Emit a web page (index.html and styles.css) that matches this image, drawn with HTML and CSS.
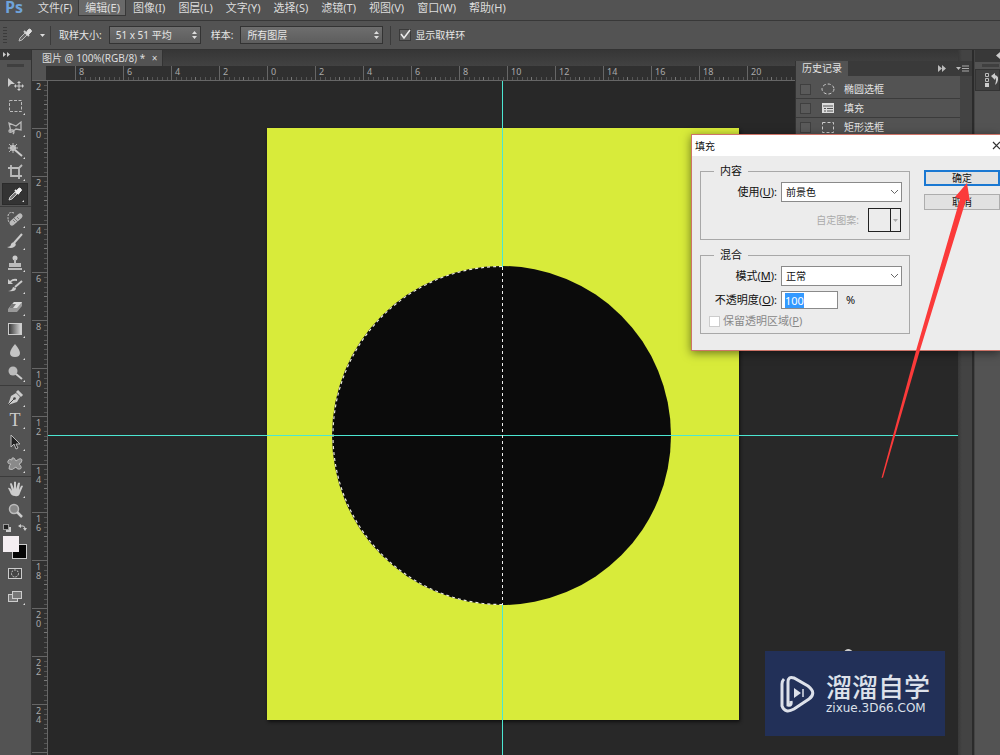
FILE: index.html
```html
<!DOCTYPE html>
<html lang="zh-CN">
<head>
<meta charset="utf-8">
<title>图片 @ 100%(RGB/8)</title>
<link rel="stylesheet" href="styles.css">
</head>
<body>
<div class="app">
  <nav class="menubar">
    <span class="logo">Ps</span>
    <button>文件(F)</button><button class="open">编辑(E)</button><button>图像(I)</button><button>图层(L)</button><button>文字(Y)</button><button>选择(S)</button><button>滤镜(T)</button><button>视图(V)</button><button>窗口(W)</button><button>帮助(H)</button>
  </nav>

  <div class="options">
    <span class="grip"></span>
    <svg class="current-tool" width="28" height="16" viewBox="0 0 28 16"><path d="M2 14l1-3 5-5 2 2-5 5z" fill="#666" stroke="#bbb"/><path d="M7 4l5 5" stroke="#ccc" stroke-width="2"/><path d="M9 6l2-3q2-2 3 0t0 2l-3 3z" fill="#ddd" stroke="#ddd"/><path d="M23 7h5l-2.500 3z" fill="#ddd"/></svg>
    <span class="divider"></span>
    <label for="size">取样大小:</label>
    <span class="dark-select size-select"><select id="size"><option>51 x 51 平均</option></select><svg width="7" height="10" viewBox="0 0 7 10"><path d="M1 4l2.500-3L6 4zM1 6l2.500 3L6 6z" fill="#ddd"/></svg></span>
    <label for="sample">样本:</label>
    <span class="dark-select sample-select"><select id="sample"><option>所有图层</option></select><svg width="7" height="10" viewBox="0 0 7 10"><path d="M1 4l2.500-3L6 4zM1 6l2.500 3L6 6z" fill="#ddd"/></svg></span>
    <span class="divider"></span>
    <label class="ring"><span class="dark-check"><input type="checkbox" checked><svg width="12" height="12" viewBox="0 0 12 12"><path d="M2 5l3 4 6-8" fill="none" stroke="#eee" stroke-width="1.500"/></svg></span>显示取样环</label>
  </div>

  <div class="workspace">
    <aside class="tools">
      <div class="tools-head"><svg width="7" height="5" viewBox="0 0 7 5"><path d="M0 0l3 2.500L0 5zM4 0l3 2.500L4 5z" fill="#ccc"/></svg></div>
      <span class="tools-grip"></span>
      <div class="group">
        <button class="tool" aria-label="移动"><svg viewBox="0 0 18 18"><path d="M2 3v9l3-3h4z" fill="#ccc"/><path d="M13 7v8M9 11h8" stroke="#ccc"/><path d="M13 6l2 2h-4zM13 16l2-2h-4zM8 11l2-2v4zM18 11l-2-2v4z" fill="#ccc"/></svg></button>
        <button class="tool more" aria-label="选框"><svg viewBox="0 0 18 18"><rect x="3.500" y="3.500" width="12" height="11" fill="none" stroke="#bbb" stroke-dasharray="3 1.500"/></svg></button>
        <button class="tool more" aria-label="套索"><svg viewBox="0 0 18 18"><path d="M5 13L3 4l7 3 5-4v8l-5-1-4 3q-3 1-3-1t4-1q2 2 0 4" fill="none" stroke="#bbb" stroke-width="1.300"/></svg></button>
        <button class="tool more" aria-label="魔棒"><svg viewBox="0 0 18 18"><circle cx="7" cy="7" r="3" fill="#ccc"/><path d="M7 2v10M2 7h10M3 3l8 8M11 3l-8 8" stroke="#bbb"/><path d="M9 9l7 6" stroke="#ccc" stroke-width="2"/></svg></button>
        <button class="tool more" aria-label="裁剪"><svg viewBox="0 0 18 18"><path d="M5 2v11h11M2 5h11v11M13 5l3-3" fill="none" stroke="#bbb" stroke-width="1.800"/></svg></button>
        <button class="tool more active" aria-label="吸管"><svg viewBox="0 0 18 18"><path d="M3 15l1-3 5-5 2 2-5 5z" fill="#777" stroke="#ccc"/><path d="M9 5l4 4" stroke="#eee" stroke-width="2"/><path d="M10 7l2-3q2-2 3 0t0 2l-3 3z" fill="#eee" stroke="#eee"/></svg></button>
      </div>
      <div class="group">
        <button class="tool more" aria-label="修复画笔"><svg viewBox="0 0 18 18"><path d="M6 13L14 6" stroke="#bbb" stroke-width="5" stroke-linecap="round"/><path d="M8 8l4 4M7 10l2 2M11 7l2 2" stroke="#777"/><path d="M8 3Q2 1 2 7q0 4 1 5" fill="none" stroke="#ccc" stroke-dasharray="2 1"/></svg></button>
        <button class="tool more" aria-label="画笔"><svg viewBox="0 0 18 18"><path d="M16 2L8 11" stroke="#ccc" stroke-width="2"/><path d="M1 15q4 0 4-3 2-3 4-1t-1 4q-3 2-7 0z" fill="#ccc"/></svg></button>
        <button class="tool more" aria-label="图章"><svg viewBox="0 0 18 18"><circle cx="9" cy="4" r="2.500" fill="#ccc"/><path d="M8 5h2v4h5v4H3V9h5zM2 14h14v2H2z" fill="#bbb"/></svg></button>
        <button class="tool more" aria-label="历史画笔"><svg viewBox="0 0 18 18"><path d="M16 5l-7 6" stroke="#ccc" stroke-width="2"/><path d="M2 15q4 0 5-4l3 1q0 4-8 3zM2 3v5h5L5 6q3-2 6-1V3Q7 2 4 5z" fill="#ccc"/></svg></button>
        <button class="tool more" aria-label="橡皮擦"><svg viewBox="0 0 18 18"><path d="M2 11l6-7h8v4l-5 6H2z" fill="#999"/><path d="M8 4h8l-5 6H3z" fill="#ddd"/><path d="M6 6h4l-3 4H3z" fill="#777"/></svg></button>
        <button class="tool more" aria-label="渐变"><svg viewBox="0 0 18 18"><defs><linearGradient id="g"><stop stop-color="#333"/><stop offset="1" stop-color="#ddd"/></linearGradient></defs><rect x="2.500" y="3.500" width="13" height="11" fill="url(#g)" stroke="#ccc"/></svg></button>
        <button class="tool more" aria-label="模糊"><svg viewBox="0 0 18 18"><path d="M9 2q5 6 5 9 0 4-5 4t-5-4q0-3 5-9z" fill="#c4c4c4"/></svg></button>
        <button class="tool more" aria-label="减淡"><svg viewBox="0 0 18 18"><circle cx="7" cy="7" r="4.500" fill="#bbb"/><path d="M10 10l6 5" stroke="#ccc" stroke-width="2"/></svg></button>
      </div>
      <div class="group">
        <button class="tool more" aria-label="钢笔"><svg viewBox="0 0 18 18"><path d="M2 16l3-9 5-3 4 4-3 5z" fill="#ccc"/><path d="M11 2l5 5" stroke="#ccc" stroke-width="3"/><path d="M2 16l6-6" stroke="#444"/><circle cx="8.500" cy="9.500" r="1.300" fill="#444"/></svg></button>
        <button class="tool more type" aria-label="文字">T</button>
        <button class="tool more" aria-label="路径选择"><svg viewBox="0 0 18 18"><path d="M5 2v12l3-3 2 5 2-1-2-4h4z" fill="#222" stroke="#bbb"/></svg></button>
        <button class="tool more" aria-label="形状"><svg viewBox="0 0 18 18"><path d="M6 5q-1-3 2-2l2 3q5-4 6-1 0 3-3 4 4 4 1 5-3 1-4-2-4 4-7 2 0-4 2-5-4 0-3-3 1-3 4-1z" fill="#8a8a8a" stroke="#bbb"/></svg></button>
      </div>
      <div class="group">
        <button class="tool more" aria-label="抓手"><svg viewBox="0 0 18 18"><path d="M2 8q2-1 4 3L4 4q1-2 2 0l2 5V2q1-1 2 0v7l2-6q1-1 2 0l-1 7 2-4q1-1 2 0l-3 7q-1 4-5 3-4 0-5-4z" fill="#ccc"/></svg></button>
        <button class="tool" aria-label="缩放"><svg viewBox="0 0 18 18"><circle cx="8" cy="7" r="4.500" fill="#888" stroke="#bbb" stroke-width="1.500"/><path d="M11 10l5 5" stroke="#ccc" stroke-width="2.500"/></svg></button>
      </div>
      <svg class="swatches" width="28" height="40" viewBox="0 0 28 40"><rect x="4" y="4" width="5" height="5" fill="#ccc"/><rect x="1.500" y="1.500" width="5" height="5" fill="#222" stroke="#999"/><path d="M18 3h3q2 0 2 3" fill="none" stroke="#ccc"/><path d="M19 1v4l-3-2zM21 5h4l-2 3z" fill="#ccc"/><rect x="10.500" y="21.500" width="14" height="14" fill="#050505" stroke="#ccc"/><rect x="1" y="13" width="16" height="16" fill="#f5eff2"/></svg>
      <button class="tool" aria-label="快速蒙版"><svg viewBox="0 0 18 18"><rect x="2.500" y="3.500" width="13" height="10" fill="#444" stroke="#ccc"/><circle cx="9" cy="8.500" r="3.500" fill="none" stroke="#ccc" stroke-dasharray="2 1"/></svg></button>
      <button class="tool more" aria-label="屏幕模式"><svg viewBox="0 0 18 18"><rect x="2.500" y="7.500" width="9" height="7" fill="#777" stroke="#ccc"/><rect x="6.500" y="4.500" width="9" height="7" fill="#777" stroke="#ccc"/></svg></button>
    </aside>

    <main class="document">
      <div class="tabs"><button class="tab">图片 @ 100%(RGB/8) * <span class="tab-close">×</span></button></div>
      <div class="ruler-x">
        <span>8</span><span>6</span><span>4</span><span>2</span><span>0</span><span>2</span><span>4</span><span>6</span><span>8</span><span>10</span><span>12</span><span>14</span><span>16</span><span>18</span><span>20</span><span></span>
      </div>
      <div class="stage">
        <div class="ruler-y">
          <span>2</span><span>0</span><span>2</span><span>4</span><span>6</span><span>8</span><span>1 0</span><span>1 2</span><span>1 4</span><span>1 6</span><span>1 8</span><span>2 0</span><span>2 2</span><span>2 4</span><span></span>
        </div>
        <div class="canvas">
          <svg class="art" width="472" height="592" viewBox="267 128 472 592">
            <rect x="267" y="128" width="472" height="592" fill="#d8eb3a"/>
            <circle cx="501.500" cy="435.500" r="169.500" fill="#0b0b0b"/>
            <path d="M502 266.500A169 169 0 0 0 502 604.500" fill="none" stroke="#ededde" stroke-width="1.200" stroke-dasharray="3 3"/>
          </svg>
          <span class="guide-y"></span><span class="guide-x"></span>
          <span class="selection-edge"></span>
          <svg class="specks" width="26" height="5" viewBox="0 0 26 5"><path d="M1 5q5-8 11 0zM20 5q3-3 5 0z" fill="#ccc"/></svg>
          <div class="watermark">
            <svg width="36" height="38" viewBox="0 0 36 38"><path d="M12 26q1 5-3 4V7q0-6 6-4l14 8q9 7 1 13L15 34q-9 5-12-3V9q0-3 2-5" fill="none" stroke="#dde1ea" stroke-width="3"/><path d="M15 13l7 5-7 5z" fill="#dde1ea"/><path d="M24 14v8" stroke="#dde1ea" stroke-width="1.500"/></svg>
            <div><div class="brand">溜溜自学</div><div class="site">zixue.3D66.COM</div></div>
          </div>
        </div>
      </div>
      <section class="history">
        <header><h2>历史记录</h2><svg width="31" height="9" viewBox="0 0 31 9"><path d="M0 1l4 3.500L0 8zM4 1l4 3.500L4 8zM18 3h5l-2.500 3z" fill="#bbb"/><path d="M24 2h7M24 4.500h7M24 7h7" stroke="#aaa"/></svg></header>
        <ul>
          <li><i></i><svg width="14" height="12" viewBox="0 0 14 12"><ellipse cx="7" cy="6" rx="6" ry="5" fill="none" stroke="#ccc" stroke-dasharray="3 2"/></svg>椭圆选框</li>
          <li><i></i><svg width="14" height="12" viewBox="0 0 14 12"><path d="M1 1h12v10H1z" fill="#ddd"/><path d="M2 4h10M3 6.500h2M6 6.500h6M3 9h2M6 9h6" stroke="#555"/></svg>填充</li>
          <li><i></i><svg width="14" height="12" viewBox="0 0 14 12"><path d="M1.500 1.500h11v10h-11z" fill="none" stroke="#ccc" stroke-dasharray="3 2"/></svg>矩形选框</li>
        </ul>
      </section>
    </main>
    <div class="scrollbar"></div>
    <aside class="dock">
      <div class="dock-head"><svg width="4" height="7" viewBox="0 0 4 7"><path d="M4 0L0 3.500 4 7z" fill="#ccc"/></svg></div>
      <span class="dock-grip"></span>
      <button class="dock-tool" aria-label="历史记录"><svg width="16" height="16" viewBox="0 0 16 16"><path d="M1.500 1.500h3v3h-3zM1.500 6.500h3v3h-3z" fill="none" stroke="#bbb"/><path d="M1 11h4v4H1z" fill="#ccc"/><path d="M7 4l4-3v2q5 1 2 8l-2 2q2-6 0-7v2z" fill="#ccc"/></svg></button>
    </aside>
  </div>

  <form class="dialog">
    <header class="titlebar"><h1>填充</h1><button type="button" class="close" aria-label="关闭"><svg width="8" height="9" viewBox="0 0 8 9"><path d="M1 1l7 7M8 1L1 8" stroke="#333" stroke-width="1.200"/></svg></button></header>
    <div class="dialog-body">
      <div class="fields">
        <fieldset>
          <legend>内容</legend>
          <div class="row"><label for="use">使用(<u>U</u>):</label><span class="light-select"><select id="use"><option>前景色</option></select><svg width="9" height="6" viewBox="0 0 9 6"><path d="M1 1l3.500 3.500L8 1" fill="none" stroke="#666"/></svg></span></div>
          <div class="row pattern"><label for="pattern">自定图案:</label><button type="button" id="pattern" disabled><span></span><svg width="5" height="3" viewBox="0 0 5 3"><path d="M0 0h5L2.500 3z" fill="#aaa"/></svg></button></div>
        </fieldset>
        <fieldset class="blend">
          <legend>混合</legend>
          <div class="row"><label for="mode">模式(<u>M</u>):</label><span class="light-select"><select id="mode"><option>正常</option></select><svg width="9" height="6" viewBox="0 0 9 6"><path d="M1 1l3.500 3.500L8 1" fill="none" stroke="#666"/></svg></span></div>
          <div class="row"><label for="opacity">不透明度(<u>O</u>):</label><span class="percent"><input id="opacity" type="text" value="100" autofocus><span>%</span></span></div>
          <label class="keep"><input type="checkbox" disabled>保留透明区域(<u>P</u>)</label>
        </fieldset>
      </div>
      <div class="actions"><button type="submit" class="ok">确定</button><button type="button">取消</button></div>
    </div>
  </form>
  <svg class="pointer" width="92" height="296" viewBox="880 183 92 296"><path d="M881.500 478L883 477.500 920 350 966 200 970 202 967 183 955 197 960 199 916.500 349z" fill="#fb3a3a"/></svg>
</div>
<script src="focus.js"></script>
</body>
</html>
```

FILE: focus.js
```js
document.getElementById("opacity").select();
```

FILE: styles.css
```css
* { box-sizing: border-box; }
body { margin: 0; font: 11px/14px "Noto Sans", "Noto Sans CJK SC", sans-serif; color: #ddd; background: #282828; }
button, select, input { font: inherit; color: inherit; margin: 0; border-radius: 0; }
button { padding: 0; border: 0; background: none; }
svg { display: block; flex: none; }
h1, h2, ul { margin: 0; padding: 0; font-weight: normal; list-style: none; }
.app { position: relative; display: flex; flex-direction: column; height: 100vh; overflow: hidden; }

.menubar { display: flex; align-items: flex-start; height: 20px; background: #535353; white-space: nowrap; }
.logo { width: 31px; padding-left: 5px; font: bold 16px/14px "Open Sans", sans-serif; color: #6fa3da; }
.menubar button { height: 16px; padding: 0 5px 0 6px; border: 1px solid transparent; border-top: 0; }
.menubar .open { background: #696969; border-color: #383838; }

.options { display: flex; align-items: center; height: 30px; background: #535353; border-top: 1px solid #383838; border-bottom: 1px solid #333; font-size: 10px; color: #e6e6e6; white-space: nowrap; }
.grip { width: 4px; height: 16px; margin: 0 10px 0 3px; background: repeating-linear-gradient(#3b3b3b 0 1px, transparent 1px 3px); }
.divider { width: 1px; height: 19px; background: #3b3b3b; margin: 0 8px 0 5px; }
.dark-select { display: grid; align-items: center; height: 18px; margin: 0 10px 0 7px; }
.dark-select select { grid-area: 1 / 1; appearance: none; width: 100%; height: 18px; padding: 0 6px; border: 1px solid #333; background: linear-gradient(#6e6e6e, #5d5d5d); }
.dark-select svg { grid-area: 1 / 1; justify-self: end; margin-right: 3px; pointer-events: none; }
.size-select { width: 92px; }
.sample-select { width: 143px; margin-right: 2px; }
.ring { display: flex; align-items: center; gap: 4px; }
.dark-check { display: grid; }
.dark-check input { grid-area: 1 / 1; appearance: none; width: 12px; height: 12px; background: #666; border: 1px solid #3a3a3a; }
.dark-check svg { grid-area: 1 / 1; pointer-events: none; }

.workspace { flex: 1; display: flex; min-height: 0; }
.tools { display: flex; flex-direction: column; flex: none; width: 32px; background: #535353; border-right: 1px solid #333; }
.tools-head { height: 10px; padding: 2px 3px; background: #383838; }
.tools-grip { width: 17px; height: 3px; margin: 4px 0 6px 7px; background: #3f3f3f; flex: none; }
.group { padding-bottom: 1px; margin-bottom: 1px; border-bottom: 1px solid #3b3b3b; }
.group:last-of-type { border-color: transparent; padding: 0; margin: 0; }
.tool { position: relative; display: flex; align-items: center; justify-content: center; width: 26px; height: 22px; margin-left: 2px; flex: none; }
.tool svg { width: 18px; height: 18px; }
.more::after { content: ""; position: absolute; right: 3px; bottom: 2px; border: 1px solid #ddd; border-top-color: transparent; border-left-color: transparent; }
.active { background: #333; border: 1px solid #2b2b2b; }
.type { font: 18px/20px "Liberation Serif", serif; color: #ccc; }
.swatches { margin-left: 2px; }

.document { position: relative; flex: 1; min-width: 0; display: flex; flex-direction: column; }
.tabs { display: flex; height: 16px; background: linear-gradient(#363636, #424242); }
.tab { height: 16px; padding: 0 4px 0 10px; background: #535353; font-size: 10px; line-height: 16px; white-space: pre; border-right: 1px solid #333; }
.tab-close { margin-left: 4px; }
.ruler-x { display: flex; height: 15px; padding-left: 43px; overflow: hidden; color: #aaa; background: linear-gradient(90deg, #535353 14px, transparent 14px) , #303030; border-bottom: 1px solid #666; font-size: 9px; line-height: 11px; }
.ruler-x span { flex: 0 0 48px; padding-left: 3px; border-left: 1px solid #666; background: linear-gradient(90deg, transparent 4px, #555 4px 5px, transparent 5px 9px, #555 9px 10px, transparent 10px 14px, #555 14px 15px, transparent 15px 19px, #555 19px 20px, transparent 20px 23px, #777 23px 24px) 0 100% / 24px 3px repeat-x; }
.stage { flex: 1; display: flex; min-height: 0; }
.ruler-y { flex: none; width: 16px; overflow: hidden; color: #aaa; background: #303030; border-right: 1px solid #666; font-size: 9px; line-height: 9px; }
.ruler-y span { display: block; height: 48px; padding: 1px 9px 0 4px; border-bottom: 1px solid #666; background: linear-gradient(transparent 4px, #555 4px 5px, transparent 5px 9px, #555 9px 10px, transparent 10px 14px, #555 14px 15px, transparent 15px 19px, #555 19px 20px, transparent 20px 23px, #777 23px 24px) 100% 0 / 3px 24px repeat-y; }
.canvas { position: relative; flex: 1; overflow: hidden; background: #282828; }
.art { position: absolute; left: 219px; top: 47px; box-shadow: 1px 2px 3px #111; }
.guide-y { position: absolute; left: 454px; top: 0; bottom: 0; width: 1px; background: #4ce6d2; }
.guide-x { position: absolute; left: 0; right: 0; top: 354px; height: 1px; background: #4ce6d2; }
.selection-edge { position: absolute; left: 454px; top: 186px; width: 1px; height: 338px; background: repeating-linear-gradient(#eee 0 3px, #0b0b0b 3px 6px); }
.specks { position: absolute; left: 794px; top: 567px; }
.watermark { position: absolute; right: 13px; bottom: 19px; display: flex; align-items: center; gap: 11px; width: 180px; height: 85px; padding-left: 14px; background: #223058; color: #dde1ea; white-space: nowrap; }
.brand { font: 500 26px/28px "Noto Sans CJK SC", sans-serif; }
.site { padding-top: 1px; font: 12px/14px "DejaVu Sans", sans-serif; }

.history { position: absolute; top: 11px; right: -14px; width: 177px; height: 90px; overflow: hidden; background: #434343; border-left: 1px solid #333; font-size: 10px; color: #e2e2e2; }
.history header { display: flex; align-items: center; justify-content: space-between; height: 15px; padding-right: 3px; background: #3a3a3a; }
.history h2 { padding: 0 6px; font-size: 10px; line-height: 15px; background: #535353; }
.history ul { width: 164px; padding-top: 4px; background: #535353; }
.history li { display: flex; align-items: center; height: 19px; border-bottom: 1px solid #3b3b3b; }
.history i { width: 11px; height: 11px; margin: 0 10px 0 4px; border: 1px solid #3f3f3f; background: #5a5a5a; }
.history li svg { margin-right: 9px; }
.scrollbar { flex: none; width: 17px; background: linear-gradient(90deg, #383838, #434343 4px 14px, #2b2b2b 14px 16px, #444 16px); }
.dock { flex: none; width: 25px; overflow: hidden; background: #535353; }
.dock-head { display: flex; justify-content: flex-end; height: 12px; padding-top: 2px; background: #383838; }
.dock-grip { display: block; width: 17px; height: 3px; margin: 2px 0 2px 7px; background: #3f3f3f; }
.dock-tool { display: flex; align-items: center; width: 25px; height: 22px; padding-left: 8px; background: #404040; border: 1px solid #333; }

.dialog { position: absolute; right: 0; top: 134px; width: 309px; background: #ececec; color: #111; border: 1px solid #ce7468; border-right: 0; box-shadow: 0 2px 9px rgba(0, 0, 0, .5); }
.titlebar { display: flex; justify-content: space-between; align-items: center; height: 21px; padding-left: 3px; background: #fff; overflow: hidden; }
.titlebar h1 { font-size: 10px; }
.dialog-body { display: flex; justify-content: space-between; padding: 8px 0 16px 8px; }
.fields { width: 210px; display: flex; flex-direction: column; gap: 8px; }
fieldset { margin: 0; padding: 4px 8px 7px; border: 1px solid #a8a8a8; min-width: 0; }
.blend { padding-bottom: 2px; }
legend { margin-left: 5px; padding: 0 6px; line-height: 14px; }
.row { display: grid; grid-template-columns: 68px 121px; column-gap: 4px; align-items: center; height: 20px; text-align: right; white-space: nowrap; }
.row + .row { margin-top: 4px; }
.row label { justify-self: end; }
.light-select { display: grid; align-items: center; }
.light-select select { grid-area: 1 / 1; appearance: none; width: 100%; height: 20px; padding: 0 4px; background: #fff; border: 1px solid #8a8a8a; font-size: 10px; }
.light-select svg { grid-area: 1 / 1; justify-self: end; margin-right: 3px; pointer-events: none; }
.row.pattern { display: flex; justify-content: flex-end; gap: 9px; height: 24px; margin-top: 6px; color: #aaa; font-size: 10px; }
.pattern button { display: flex; align-items: center; gap: 2px; width: 33px; height: 24px; border: 1px solid #222; }
.pattern button span { width: 22px; height: 22px; border-right: 1px solid #222; }
.percent { display: flex; align-items: center; gap: 8px; }
.percent input { width: 57px; height: 18px; padding: 0 3px; border: 1px solid #8a8a8a; background: #fff; outline: 0; }
.percent input::selection { background: #3399ff; color: #fff; }
.keep { display: flex; align-items: center; height: 20px; margin-top: 1px; color: #888; white-space: nowrap; }
.keep input { appearance: none; width: 11px; height: 11px; margin-right: 3px; background: #fff; border: 1px solid #ccc; }
.actions { display: flex; flex-direction: column; gap: 8px; width: 76px; padding-top: 6px; }
.actions button { height: 16px; border: 1px solid #adadad; background: #e1e1e1; font-size: 10px; line-height: 14px; }
.actions .ok { border: 2px solid #1a78d2; line-height: 12px; }
.pointer { position: absolute; right: 28px; top: 183px; pointer-events: none; }
```
